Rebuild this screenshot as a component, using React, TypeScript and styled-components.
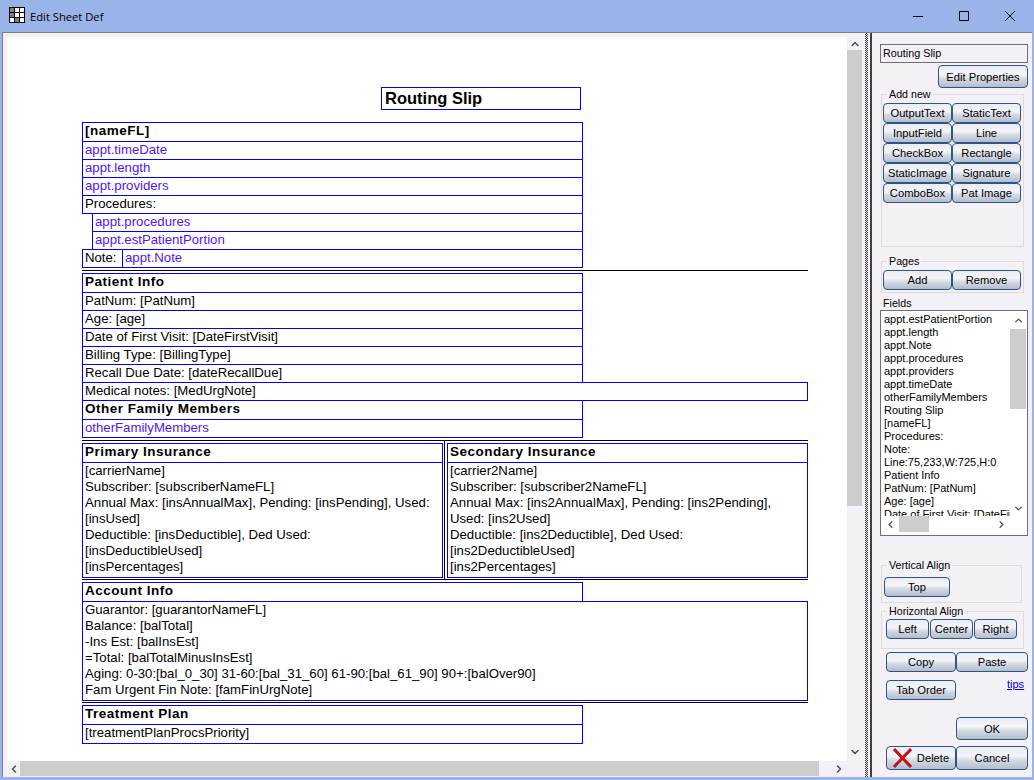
import React from "react";
import styled, { createGlobalStyle, css } from "styled-components";
import { ChevronUp, ChevronDown, ChevronLeft, ChevronRight } from "lucide-react";

const PANEL = "#f3f1f6";
const GlobalStyle = createGlobalStyle`
  html, body { margin: 0; padding: 0; height: 100%; overflow: hidden; }
  body { font-family: "Liberation Sans", Arial, sans-serif; font-size: 12px; color: #000; background: #99b4e8; }
`;

const Window = styled.div`
  width: 1034px;
  height: 780px;
  display: flex;
  flex-direction: column;
  background: #99b4e8;
  box-sizing: border-box;
  padding: 0 2px 3px 2px;
`;

const TitleBar = styled.div`
  height: 32px;
  flex-shrink: 0;
  margin: 0 -2px;
  display: flex;
  align-items: center;
  padding-left: 9px;
  gap: 5px;
`;

const Title = styled.span`
  font-family: "Open Sans", "Noto Sans", sans-serif;
  font-size: 11.2px;
  flex: 1;
`;

const AppIcon = styled.svg`
  width: 16px;
  height: 16px;
  flex-shrink: 0;
  margin-top: -2px;
`;

const WindowControls = styled.div`
  display: flex;
  height: 32px;
  margin-right: 1px;
`;

const ControlButton = styled.div`
  width: 46px;
  display: flex;
  align-items: center;
  justify-content: center;
`;

const Body = styled.div`
  flex: 1;
  display: flex;
  min-height: 0;
  background: ${PANEL};
  border-top: 1px solid #808080;
  border-left: 1px solid #808080;
`;

const SheetArea = styled.div`
  width: 859px;
  flex-shrink: 0;
  display: grid;
  grid-template-columns: 1fr 15px;
  grid-template-rows: 1fr 15px;
  padding: 4px 0 1px 4px;
  box-sizing: border-box;
`;

const Sheet = styled.div`
  position: relative;
  background: #fff;
  overflow: hidden;
`;

const Field = styled.div<{ $x: number; $y: number; $w: number; $h: number; $kind?: string }>`
  position: absolute;
  left: ${(p) => p.$x - 7}px;
  top: ${(p) => p.$y - 37}px;
  width: ${(p) => p.$w}px;
  height: ${(p) => p.$h}px;
  box-sizing: border-box;
  border: 1px solid #0000ff;
  padding: 0 2px;
  white-space: pre;
  line-height: 16px;
  font-size: 13.2px;
  ${(p) =>
    p.$kind === "out" &&
    css`
      color: #5014ff;
    `}
  ${(p) =>
    p.$kind === "bold" &&
    css`
      font-weight: 700;
      font-size: 13.5px;
      letter-spacing: 0.5px;
    `}
  ${(p) =>
    p.$kind === "title" &&
    css`
      font-weight: 700;
      font-size: 16.5px;
      line-height: 20px;
      padding-left: 3px;
    `}
`;

const Rule = styled.div<{ $x: number; $y: number; $w: number; $h: number }>`
  position: absolute;
  left: ${(p) => p.$x - 7}px;
  top: ${(p) => p.$y - 37}px;
  width: ${(p) => p.$w}px;
  height: ${(p) => p.$h}px;
  background: #000;
`;

const VScroll = styled.div`
  display: flex;
  flex-direction: column;
  align-items: stretch;
`;

const HScroll = styled.div`
  display: flex;
  align-items: stretch;
`;

const ArrowBox = styled.div<{ $size: number }>`
  flex: 0 0 ${(p) => p.$size}px;
  display: flex;
  align-items: center;
  justify-content: center;
  color: #505050;
`;

const Thumb = styled.div<{ $len: number }>`
  flex: 0 0 ${(p) => p.$len}px;
  background: #cdcdcd;
`;

const Track = styled.div`
  flex: 1;
`;

const Corner = styled.div``;

const Splitter = styled.div`
  width: 7px;
  flex-shrink: 0;
  display: flex;
  justify-content: space-between;
  margin-left: 3px;
`;

const SplitterDots = styled.div`
  width: 3px;
  background: repeating-conic-gradient(#303030 0 25%, #f3f1f6 0 50%) 0 0 / 2px 2px;
`;

const SplitterLine = styled.div`
  width: 2px;
  background: #404040;
`;

const Panel = styled.div`
  flex: 1;
  display: flex;
  flex-direction: column;
  align-items: flex-start;
  padding: 11px 0 0 8px;
  min-width: 0;
`;

const NameBox = styled.div`
  width: 148px;
  height: 19px;
  box-sizing: border-box;
  border: 1px solid #707070;
  font-size: 10.8px;
  line-height: 17px;
  padding-left: 2px;
`;

const Btn = styled.button<{ $w: number; $h?: number }>`
  width: ${(p) => p.$w}px;
  height: ${(p) => p.$h ?? 20}px;
  flex-shrink: 0;
  padding: 0;
  box-sizing: border-box;
  border: 1px solid #2f5580;
  border-radius: 4px;
  font-family: "Liberation Sans", Arial, sans-serif;
  font-size: 11.2px;
  color: #000;
  background: linear-gradient(#e9ecf2 0%, #f4f5f8 40%, #d5dae3 60%, #c0c8d6 85%, #b0bccf 100%);
  display: flex;
  align-items: center;
  justify-content: center;
`;

const EditBtn = styled(Btn)`
  margin: 2px 0 0 58px;
`;

const Group = styled.div<{ $w: number; $h: number; $top: number; $pad: number }>`
  position: relative;
  width: ${(p) => p.$w}px;
  height: ${(p) => p.$h}px;
  margin: ${(p) => p.$top}px 0 0 1px;
  padding: ${(p) => p.$pad}px 0 0 1px;
  box-sizing: border-box;
  border: 1px solid #dcdcdc;
`;

const GroupLabel = styled.span`
  position: absolute;
  top: -8px;
  left: 5px;
  padding: 0 2px;
  background: ${PANEL};
  font-size: 10.7px;
  line-height: 14px;
`;

const ButtonGrid = styled.div`
  display: grid;
  grid-template-columns: 69px 69px;
  grid-auto-rows: 20px;
`;

const AlignRow = styled.div<{ $left: number }>`
  display: flex;
  gap: 1px;
  padding-left: ${(p) => p.$left}px;
`;

const FieldsLabel = styled.div`
  margin: 4px 0 0 3px;
  font-size: 10.7px;
  line-height: 13px;
`;

const FieldList = styled.div`
  width: 148px;
  height: 226px;
  box-sizing: border-box;
  border: 1px solid #707070;
  background: #fff;
  display: grid;
  grid-template-columns: 1fr 16px;
  grid-template-rows: 205px 16px;
  padding: 0 1px 2px;
`;

const ListItems = styled.div`
  overflow: hidden;
  padding: 2px 0 0 2px;
  font-size: 11px;
  line-height: 13px;
  white-space: nowrap;
`;

const ListRow = styled.div``;

const Row = styled.div<{ $top: number; $left: number }>`
  display: flex;
  margin: ${(p) => p.$top}px 0 0 ${(p) => p.$left}px;
`;

const TipsLink = styled.a`
  font-size: 11px;
  color: #0000ff;
  text-decoration: underline;
  margin: -2px 0 0 51px;
  align-self: flex-start;
  line-height: 13px;
`;

const DeleteIcon = styled.svg`
  width: 19px;
  height: 20px;
  margin-right: 5px;
`;

const fieldRows: { x: number; y: number; b: number; r?: number; t: string; k?: string }[] = [
  { x: 381, y: 87, b: 109, r: 580, t: "Routing Slip", k: "title" },
  { x: 82, y: 122, b: 141, t: "[nameFL]", k: "bold" },
  { x: 82, y: 141, b: 159, t: "appt.timeDate", k: "out" },
  { x: 82, y: 159, b: 177, t: "appt.length", k: "out" },
  { x: 82, y: 177, b: 195, t: "appt.providers", k: "out" },
  { x: 82, y: 195, b: 213, t: "Procedures:" },
  { x: 92, y: 213, b: 231, t: "appt.procedures", k: "out" },
  { x: 92, y: 231, b: 249, t: "appt.estPatientPortion", k: "out" },
  { x: 82, y: 249, b: 267, r: 122, t: "Note:" },
  { x: 122, y: 249, b: 267, t: "appt.Note", k: "out" },
  { x: 82, y: 273, b: 292, t: "Patient Info", k: "bold" },
  { x: 82, y: 292, b: 310, t: "PatNum: [PatNum]" },
  { x: 82, y: 310, b: 328, t: "Age: [age]" },
  { x: 82, y: 328, b: 346, t: "Date of First Visit: [DateFirstVisit]" },
  { x: 82, y: 346, b: 364, t: "Billing Type: [BillingType]" },
  { x: 82, y: 364, b: 382, t: "Recall Due Date: [dateRecallDue]" },
  { x: 82, y: 382, b: 400, r: 807, t: "Medical notes: [MedUrgNote]" },
  { x: 82, y: 400, b: 419, t: "Other Family Members", k: "bold" },
  { x: 82, y: 419, b: 437, t: "otherFamilyMembers", k: "out" },
  { x: 82, y: 443, b: 462, r: 442, t: "Primary Insurance", k: "bold" },
  {
    x: 82,
    y: 462,
    b: 577,
    r: 442,
    t: "[carrierName]\nSubscriber: [subscriberNameFL]\nAnnual Max: [insAnnualMax], Pending: [insPending], Used:\n[insUsed]\nDeductible: [insDeductible], Ded Used:\n[insDeductibleUsed]\n[insPercentages]",
  },
  { x: 447, y: 443, b: 462, r: 807, t: "Secondary Insurance", k: "bold" },
  {
    x: 447,
    y: 462,
    b: 577,
    r: 807,
    t: "[carrier2Name]\nSubscriber: [subscriber2NameFL]\nAnnual Max: [ins2AnnualMax], Pending: [ins2Pending],\nUsed: [ins2Used]\nDeductible: [ins2Deductible], Ded Used:\n[ins2DeductibleUsed]\n[ins2Percentages]",
  },
  { x: 82, y: 582, b: 601, t: "Account Info", k: "bold" },
  {
    x: 82,
    y: 601,
    b: 700,
    r: 807,
    t: "Guarantor: [guarantorNameFL]\nBalance: [balTotal]\n-Ins Est: [balInsEst]\n=Total: [balTotalMinusInsEst]\nAging: 0-30:[bal_0_30] 31-60:[bal_31_60] 61-90:[bal_61_90] 90+:[balOver90]\nFam Urgent Fin Note: [famFinUrgNote]",
  },
  { x: 82, y: 705, b: 724, t: "Treatment Plan", k: "bold" },
  { x: 82, y: 724, b: 743, t: "[treatmentPlanProcsPriority]" },
];

const rules = [
  { x: 82, y: 270, w: 726, h: 1 },
  { x: 82, y: 440, w: 726, h: 1 },
  { x: 444, y: 440, w: 1, h: 139 },
  { x: 82, y: 579, w: 726, h: 1 },
  { x: 82, y: 702, w: 726, h: 1 },
];

const addNew = [
  "OutputText",
  "StaticText",
  "InputField",
  "Line",
  "CheckBox",
  "Rectangle",
  "StaticImage",
  "Signature",
  "ComboBox",
  "Pat Image",
];

const listItems = [
  "appt.estPatientPortion",
  "appt.length",
  "appt.Note",
  "appt.procedures",
  "appt.providers",
  "appt.timeDate",
  "otherFamilyMembers",
  "Routing Slip",
  "[nameFL]",
  "Procedures:",
  "Note:",
  "Line:75,233,W:725,H:0",
  "Patient Info",
  "PatNum: [PatNum]",
  "Age: [age]",
  "Date of First Visit: [DateFirstVisit]",
];

const SheetIcon = () => (
  <AppIcon viewBox="0 0 16 16">
    <rect width="16" height="16" fill="#000" />
    {[0, 1, 2].map((r) =>
      [0, 1, 2].map((c) => (
        <rect
          key={`${r}-${c}`}
          x={1 + c * 5}
          y={1 + r * 5}
          width="4"
          height="4"
          fill={(r === 0 && c === 0) || (r === 1 && c === 0) || (r === 2 && c === 1) ? "#808080" : "#fff"}
        />
      ))
    )}
  </AppIcon>
);

export default function App() {
  return (
    <Window>
      <GlobalStyle />
      <TitleBar>
        <SheetIcon />
        <Title>Edit Sheet Def</Title>
        <WindowControls>
          <ControlButton>
            <svg width="10" height="10" viewBox="0 0 10 10">
              <path d="M0 5.5H10" stroke="#000" fill="none" />
            </svg>
          </ControlButton>
          <ControlButton>
            <svg width="10" height="10" viewBox="0 0 10 10">
              <rect x="0.5" y="0.5" width="9" height="9" stroke="#000" fill="none" />
            </svg>
          </ControlButton>
          <ControlButton>
            <svg width="10" height="10" viewBox="0 0 10 10">
              <path d="M0 0L10 10M10 0L0 10" stroke="#000" fill="none" />
            </svg>
          </ControlButton>
        </WindowControls>
      </TitleBar>
      <Body>
        <SheetArea>
          <Sheet>
            {fieldRows.map((f) => (
              <Field key={f.t} $x={f.x} $y={f.y} $w={(f.r ?? 582) - f.x + 1} $h={f.b - f.y + 1} $kind={f.k}>
                {f.t}
              </Field>
            ))}
            {rules.map((r) => (
              <Rule key={`${r.x}-${r.y}`} $x={r.x} $y={r.y} $w={r.w} $h={r.h} />
            ))}
          </Sheet>
          <VScroll>
            <ArrowBox $size={13}>
              <ChevronUp size={12} strokeWidth={3} />
            </ArrowBox>
            <Thumb $len={456} />
            <Track />
            <ArrowBox $size={18}>
              <ChevronDown size={12} strokeWidth={3} />
            </ArrowBox>
          </VScroll>
          <HScroll>
            <ArrowBox $size={13}>
              <ChevronLeft size={12} strokeWidth={3} />
            </ArrowBox>
            <Thumb $len={799} />
            <Track />
            <ArrowBox $size={17}>
              <ChevronRight size={12} strokeWidth={3} />
            </ArrowBox>
          </HScroll>
          <Corner />
        </SheetArea>
        <Splitter>
          <SplitterDots />
          <SplitterLine />
        </Splitter>
        <Panel>
          <NameBox>Routing Slip</NameBox>
          <EditBtn $w={90} $h={23}>
            Edit Properties
          </EditBtn>
          <Group $w={143} $h={153} $top={6} $pad={8}>
            <GroupLabel>Add new</GroupLabel>
            <ButtonGrid>
              {addNew.map((b) => (
                <Btn key={b} $w={69}>
                  {b}
                </Btn>
              ))}
            </ButtonGrid>
          </Group>
          <Group $w={143} $h={32} $top={14} $pad={8}>
            <GroupLabel>Pages</GroupLabel>
            <ButtonGrid>
              <Btn $w={69}>Add</Btn>
              <Btn $w={69}>Remove</Btn>
            </ButtonGrid>
          </Group>
          <FieldsLabel>Fields</FieldsLabel>
          <FieldList>
            <ListItems>
              {listItems.map((i) => (
                <ListRow key={i}>{i}</ListRow>
              ))}
            </ListItems>
            <VScroll>
              <ArrowBox $size={18}>
                <ChevronUp size={11} strokeWidth={3} />
              </ArrowBox>
              <Thumb $len={80} />
              <Track />
              <ArrowBox $size={16}>
                <ChevronDown size={11} strokeWidth={3} />
              </ArrowBox>
            </VScroll>
            <HScroll>
              <ArrowBox $size={17}>
                <ChevronLeft size={11} strokeWidth={3} />
              </ArrowBox>
              <Thumb $len={30} />
              <Track />
              <ArrowBox $size={17}>
                <ChevronRight size={11} strokeWidth={3} />
              </ArrowBox>
            </HScroll>
            <Corner />
          </FieldList>
          <Group $w={141} $h={38} $top={29} $pad={11}>
            <GroupLabel>Vertical Align</GroupLabel>
            <AlignRow $left={1}>
              <Btn $w={66}>Top</Btn>
            </AlignRow>
          </Group>
          <Group $w={143} $h={38} $top={8} $pad={7}>
            <GroupLabel>Horizontal Align</GroupLabel>
            <AlignRow $left={3}>
              <Btn $w={43}>Left</Btn>
              <Btn $w={43}>Center</Btn>
              <Btn $w={43}>Right</Btn>
            </AlignRow>
          </Group>
          <Row $top={3} $left={6}>
            <Btn $w={70}>Copy</Btn>
            <Btn $w={72}>Paste</Btn>
          </Row>
          <Row $top={8} $left={6}>
            <Btn $w={70}>Tab Order</Btn>
            <TipsLink href="#">tips</TipsLink>
          </Row>
          <Row $top={17} $left={76}>
            <Btn $w={72} $h={23}>
              OK
            </Btn>
          </Row>
          <Row $top={6} $left={6}>
            <Btn $w={70} $h={24}>
              <DeleteIcon viewBox="0 0 19 20">
                <path d="M1 1L18 19M18 1L1 19" stroke="#c4101c" strokeWidth="3" fill="none" />
              </DeleteIcon>
              Delete
            </Btn>
            <Btn $w={72} $h={24}>
              Cancel
            </Btn>
          </Row>
        </Panel>
      </Body>
    </Window>
  );
}
